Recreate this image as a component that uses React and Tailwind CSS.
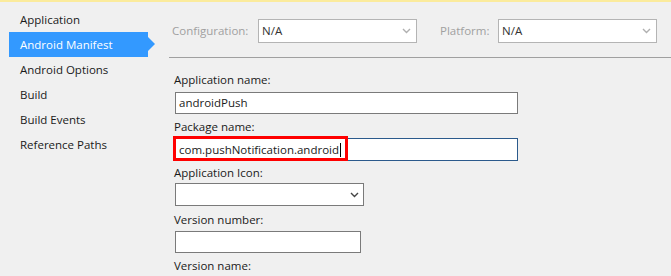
const font = { fontFamily: '"Open Sans", "Noto Sans", sans-serif' };

const navItems = [
  'Application',
  'Android Manifest',
  'Android Options',
  'Build',
  'Build Events',
  'Reference Paths',
];

function Chevron({ className }) {
  return (
    <svg width="9" height="6" viewBox="0 0 9 6" className={className}>
      <path d="M1 1 L4.5 4.5 L8 1" fill="none" stroke="currentColor" strokeWidth="1.4" />
    </svg>
  );
}

export default function App() {
  return (
    <div
      className="w-[671px] h-[276px] overflow-hidden bg-[#f0f0f0] border-t-2 border-[#fbeb9c] text-[11.5px] text-[#1a1a1a] flex"
      style={font}
    >
      {/* 左侧导航 */}
      <div className="w-[169px] shrink-0 pt-[5px]">
        {navItems.map((item, i) =>
          i === 1 ? (
            <div key={item} className="relative ml-[9px] w-[139px] h-[25px] flex items-center pl-[11px] bg-[#3399ff] text-white">
              {item}
              <span className="absolute left-[139px] top-[5px] w-0 h-0 border-y-[7px] border-y-transparent border-l-[7px] border-l-[#3399ff]" />
            </div>
          ) : (
            <div key={item} className="ml-[9px] h-[25px] flex items-center pl-[11px]">
              {item}
            </div>
          )
        )}
      </div>

      {/* 右侧内容 */}
      <div className="flex-1">
        <div className="flex items-center mt-[17px] pl-[3px] h-[24px]">
          <span className="w-[86px] text-[#a0a0a0]">Configuration:</span>
          <div className="w-[159px] h-[24px] border border-[#b4b4b4] bg-white flex items-center justify-between pl-[3px] pr-[5px] text-[#333]">
            <span>N/A</span>
            <Chevron className="text-[#b0b0b0]" />
          </div>
          <span className="ml-[23px] w-[58px] text-[#a0a0a0]">Platform:</span>
          <div className="w-[159px] h-[24px] border border-[#b4b4b4] bg-white flex items-center justify-between pl-[3px] pr-[5px] text-[#333]">
            <span>N/A</span>
            <Chevron className="text-[#b0b0b0]" />
          </div>
        </div>

        <div className="mt-[14px] h-px bg-[#a0a0a0]" />

        <div className="pl-[5px]">
          <div className="mt-[14px] h-[16px] leading-[16px]">Application name:</div>
          <div className="mt-[4px] ml-px w-[343px] h-[22px] border border-[#7a7a7a] bg-white flex items-center pl-[3px]">
            androidPush
          </div>

          <div className="mt-[5px] h-[16px] leading-[16px]">Package name:</div>
          <div className="relative mt-[3px] ml-px w-[343px] h-[23px] border border-[#2b5a8c] bg-white flex items-center pl-[3px]">
            <span>com.pushNotification.android</span>
            <span className="w-px h-[14px] bg-black ml-px" />
            <div className="absolute -left-[3px] -top-[3px] w-[175px] h-[25px] border-[3px] border-[#ff0000]" />
          </div>

          <div className="mt-[4px] h-[16px] leading-[16px]">Application Icon:</div>
          <div className="mt-[2px] ml-px w-[189px] h-[23px] border border-[#7a7a7a] bg-white flex items-center justify-end pr-[4px]">
            <Chevron className="text-[#444]" />
          </div>

          <div className="mt-[6px] h-[16px] leading-[16px]">Version number:</div>
          <div className="mt-[3px] ml-px w-[186px] h-[22px] border border-[#7a7a7a] bg-white" />

          <div className="mt-[5px] h-[16px] leading-[16px]">Version name:</div>
        </div>
      </div>
    </div>
  );
}
